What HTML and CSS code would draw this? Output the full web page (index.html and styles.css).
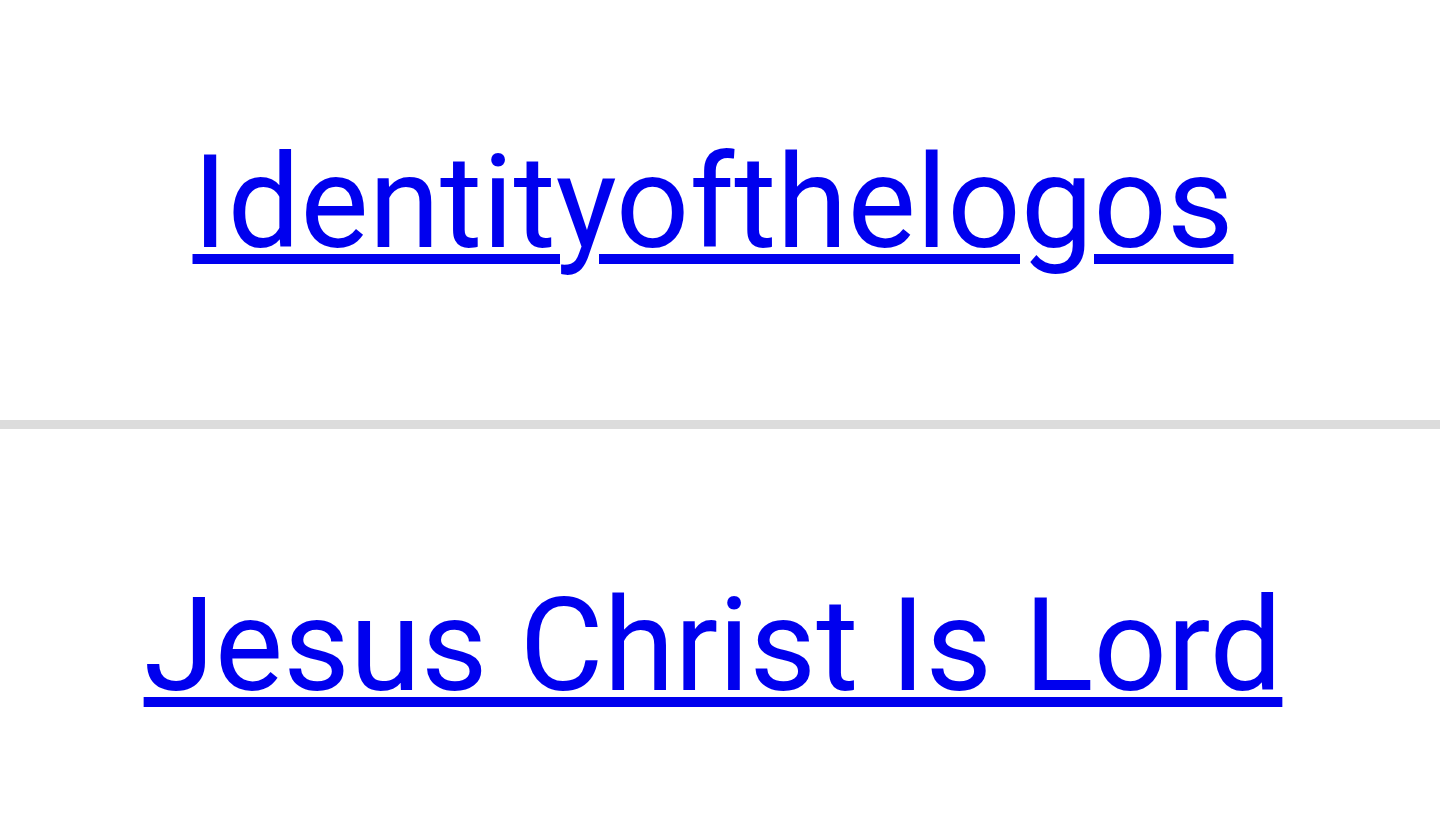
FILE: index.html
```html
<!DOCTYPE html>
<html lang="en">
<head>
<meta charset="utf-8">
<title>Links</title>
<link rel="stylesheet" href="styles.css">
</head>
<body>
  <main class="page">
    <section class="entry entry-first">
      <a class="entry-link" href="#">Identityofthelogos</a>
    </section>
    <div class="divider"></div>
    <section class="entry entry-second">
      <a class="entry-link" href="#">Jesus Christ Is Lord</a>
    </section>
  </main>
</body>
</html>
```

FILE: styles.css
```css
html, body {
  margin: 0;
  padding: 0;
  background: #ffffff;
}

.page {
  display: flex;
  flex-direction: column;
  font-family: Roboto, "Noto Sans", sans-serif;
}

.entry {
  text-align: center;
  padding-right: 14px;
  font-size: 129px;
  line-height: 156px;
}

.entry-first {
  padding-top: 125px;
  padding-bottom: 139px;
}

.entry-second {
  padding-top: 139px;
}

.entry-link {
  color: #0000ee;
  text-decoration: underline;
  text-decoration-thickness: 10px;
  text-underline-offset: 7px;
}

.divider {
  height: 9px;
  background: #dcdcdc;
}
```
